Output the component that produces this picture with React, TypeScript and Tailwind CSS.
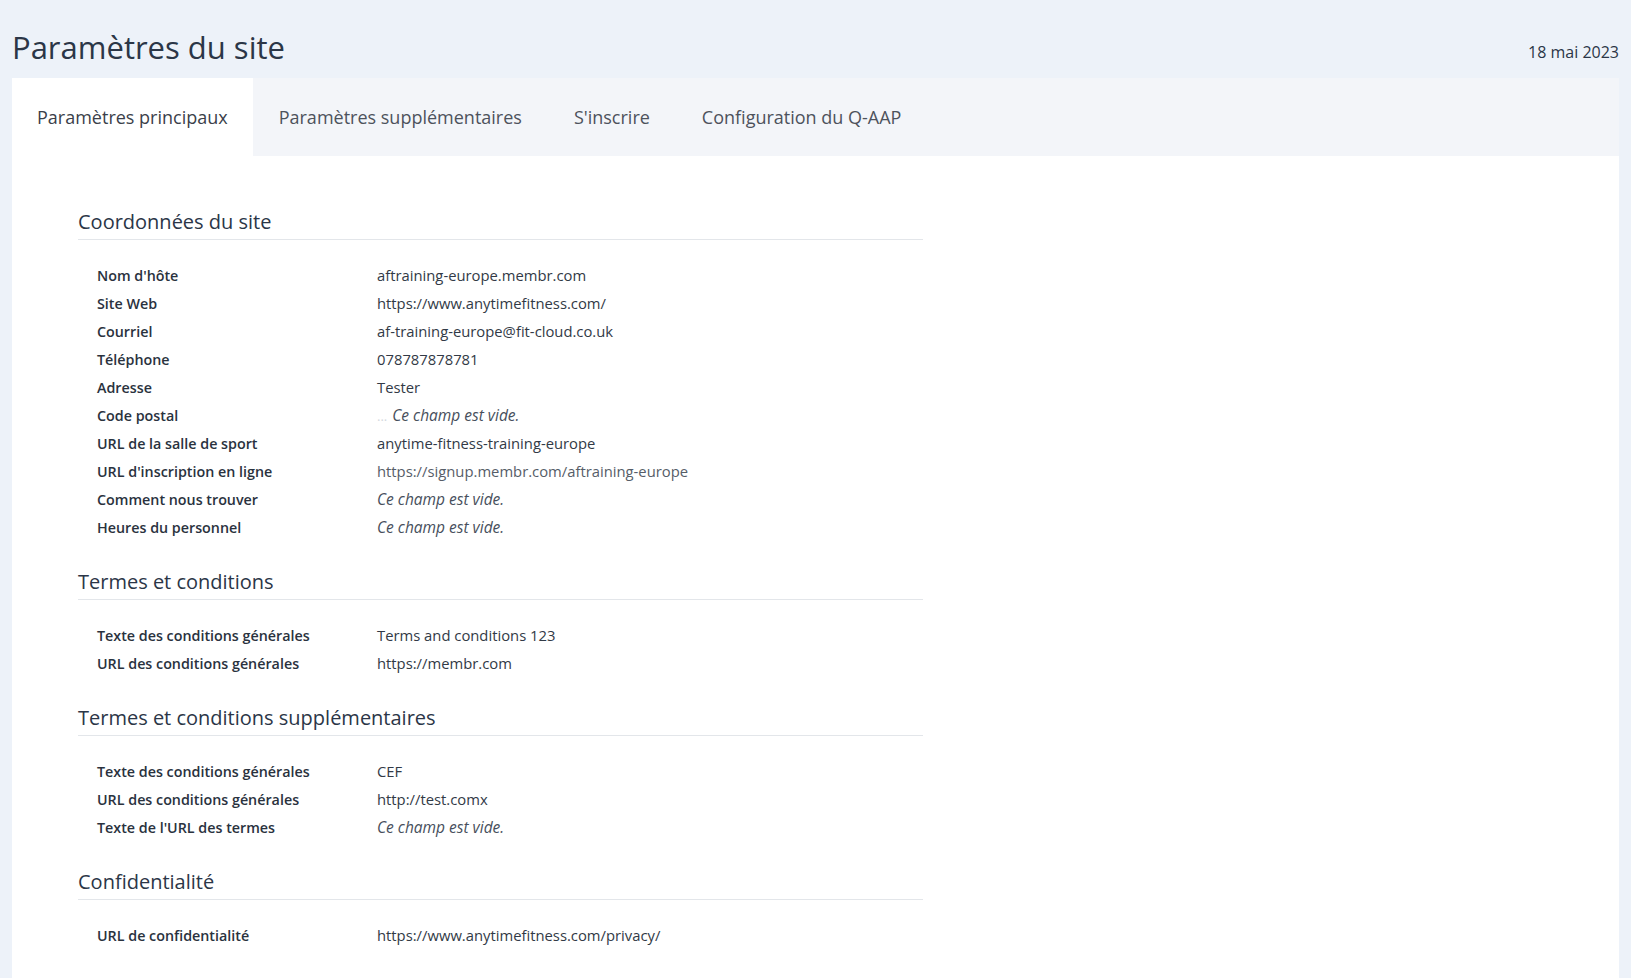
import React from 'react'

type Row = { label: string; value?: string; muted?: boolean; dots?: boolean }

const sections: { title: string; rows: Row[] }[] = [
  {
    title: 'Coordonnées du site',
    rows: [
      { label: "Nom d'hôte", value: 'aftraining-europe.membr.com' },
      { label: 'Site Web', value: 'https://www.anytimefitness.com/' },
      { label: 'Courriel', value: 'af-training-europe@fit-cloud.co.uk' },
      { label: 'Téléphone', value: '078787878781' },
      { label: 'Adresse', value: 'Tester' },
      { label: 'Code postal', dots: true },
      { label: 'URL de la salle de sport', value: 'anytime-fitness-training-europe' },
      { label: "URL d'inscription en ligne", value: 'https://signup.membr.com/aftraining-europe', muted: true },
      { label: 'Comment nous trouver' },
      { label: 'Heures du personnel' },
    ],
  },
  {
    title: 'Termes et conditions',
    rows: [
      { label: 'Texte des conditions générales', value: 'Terms and conditions 123' },
      { label: 'URL des conditions générales', value: 'https://membr.com' },
    ],
  },
  {
    title: 'Termes et conditions supplémentaires',
    rows: [
      { label: 'Texte des conditions générales', value: 'CEF' },
      { label: 'URL des conditions générales', value: 'http://test.comx' },
      { label: "Texte de l'URL des termes" },
    ],
  },
  {
    title: 'Confidentialité',
    rows: [{ label: 'URL de confidentialité', value: 'https://www.anytimefitness.com/privacy/' }],
  },
]

const tabs = ['Paramètres principaux', 'Paramètres supplémentaires', "S'inscrire", 'Configuration du Q-AAP']

function Empty({ dots }: { dots?: boolean }) {
  return (
    <span className="italic text-[15.5px] text-[#474f5c]">
      {dots && <span className="not-italic text-[#d4d8de] mr-[5px] text-[13px]">...</span>}
      Ce champ est vide.
    </span>
  )
}

export default function App() {
  return (
    <div className="min-h-screen bg-[#edf2f9] px-3 text-[#2f3a4a]" style={{ fontFamily: '"Open Sans", sans-serif' }}>
      <div className="flex items-end justify-between pt-[26px] h-[78px]">
        <h1 className="text-[31px] leading-[40px] text-[#2b3647] pb-[11px]">Paramètres du site</h1>
        <span className="text-[16px] text-[#2b3647] pb-[14px]">18 mai 2023</span>
      </div>

      <div className="bg-white min-h-[900px]">
        <div className="flex h-[78px] bg-[#f3f5f9]">
          {tabs.map((tab, i) => (
            <div
              key={tab}
              className={
                i === 0
                  ? 'flex items-center px-[25px] bg-white text-[18px] text-[#3b3f4a]'
                  : 'flex items-center px-[26px] text-[18px] text-[#4d525c]'
              }
            >
              {tab}
            </div>
          ))}
        </div>

        <div className="pl-[66px] pt-[52px] pb-10">
          {sections.map((section, si) => (
            <section key={section.title} className={si === 0 ? 'w-[845px]' : 'w-[845px] mt-[27px]'}>
              <h2 className="text-[20px] leading-[28px] text-[#2b3647] pb-[3px] border-b border-[#e3e6ea]">
                {section.title}
              </h2>
              <div className="mt-[21px] pl-[19px]">
                {section.rows.map((row) => (
                  <div key={row.label} className="flex h-[28px] items-baseline leading-[28px] text-[14.8px]">
                    <div className="w-[280px] shrink-0 font-semibold text-[14.3px] text-[#2a323e]">{row.label}</div>
                    <div className={row.muted ? 'text-[#565d68]' : 'text-[#323a46]'}>
                      {row.value ? row.value : <Empty dots={row.dots} />}
                    </div>
                  </div>
                ))}
              </div>
            </section>
          ))}
        </div>
      </div>
    </div>
  )
}
